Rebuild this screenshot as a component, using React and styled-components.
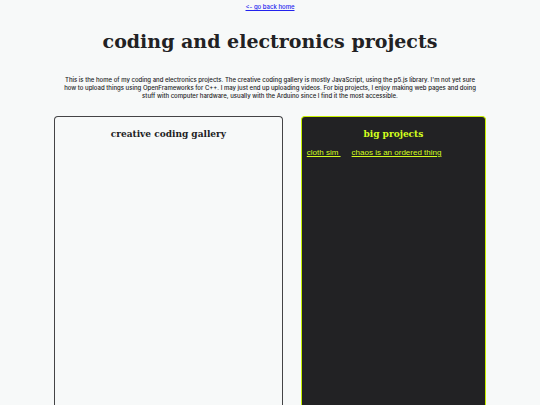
import styled, { createGlobalStyle } from 'styled-components';

const GlobalStyle = createGlobalStyle`
  body {
    margin: 0;
    background-color: #f7f9f9;
    color: #222224;
    font-family: 'Liberation Sans', Arial, sans-serif;
    overflow: hidden;
  }
`;

const Page = styled.div`
  display: flex;
  flex-direction: column;
  width: 80%;
  height: 100vh;
  margin: 0 auto;
  text-align: center;
`;

const Nav = styled.nav`
  padding-top: 3px;
  font-family: Inter, sans-serif;
  font-size: 6px;
  font-weight: 500;
  font-variant-ligatures: none;
  font-feature-settings: 'calt' 0;
  line-height: 8px;
`;

const BackLink = styled.a`
  color: #2222ee;
`;

const Title = styled.h1`
  margin: 17px 0 22px;
  font-family: 'DejaVu Serif', serif;
  font-size: 19px;
  line-height: 26px;
`;

const Intro = styled.p`
  margin: 0 0 16px;
  padding: 0 6px;
  font-family: Inter, sans-serif;
  font-size: 6px;
  font-weight: 500;
  line-height: 8px;
`;

const Columns = styled.main`
  flex: 1;
  display: grid;
  grid-template-columns: 21fr 17fr;
  gap: 18px;
  min-height: 300px;
`;

const Panel = styled.section`
  padding: 9px 5px;
  border: 1px solid ${({ $dark }) => ($dark ? '#c8f000' : '#444446')};
  border-bottom: none;
  border-radius: 4px 4px 0 0;
  background-color: ${({ $dark }) => ($dark ? '#222224' : 'transparent')};
  color: ${({ $dark }) => ($dark ? '#d4ff1e' : '#222224')};
`;

const PanelTitle = styled.h2`
  margin: 0 0 6px;
  font-family: 'DejaVu Serif', serif;
  font-size: 9px;
  line-height: 16px;
`;

const ProjectList = styled.ul`
  display: flex;
  gap: 11px;
  margin: 0;
  padding: 0;
  list-style: none;
  font-size: 8px;
  line-height: 9px;
`;

const ProjectLink = styled.a`
  color: #d4ff1e;
  white-space: pre;
`;

export default function App() {
  return (
    <>
      <GlobalStyle />
      <Page>
        <Nav>
          <BackLink href="#home">&lt;- go back home</BackLink>
        </Nav>
        <Title>coding and electronics projects</Title>
        <Intro>
          This is the home of my coding and electronics projects. The creative
          coding gallery is mostly JavaScript, using the p5.js library. I'm not
          yet sure how to upload things using OpenFrameworks for C++. I may just
          end up uploading videos. For big projects, I enjoy making web pages
          and doing stuff with computer hardware, usually with the Arduino since
          I find it the most accessible.
        </Intro>
        <Columns>
          <Panel>
            <PanelTitle>creative coding gallery</PanelTitle>
          </Panel>
          <Panel $dark>
            <PanelTitle>big projects</PanelTitle>
            <ProjectList>
              <li>
                <ProjectLink href="#cloth-sim">{'cloth sim '}</ProjectLink>
              </li>
              <li>
                <ProjectLink href="#chaos">chaos is an ordered thing</ProjectLink>
              </li>
            </ProjectList>
          </Panel>
        </Columns>
      </Page>
    </>
  );
}
